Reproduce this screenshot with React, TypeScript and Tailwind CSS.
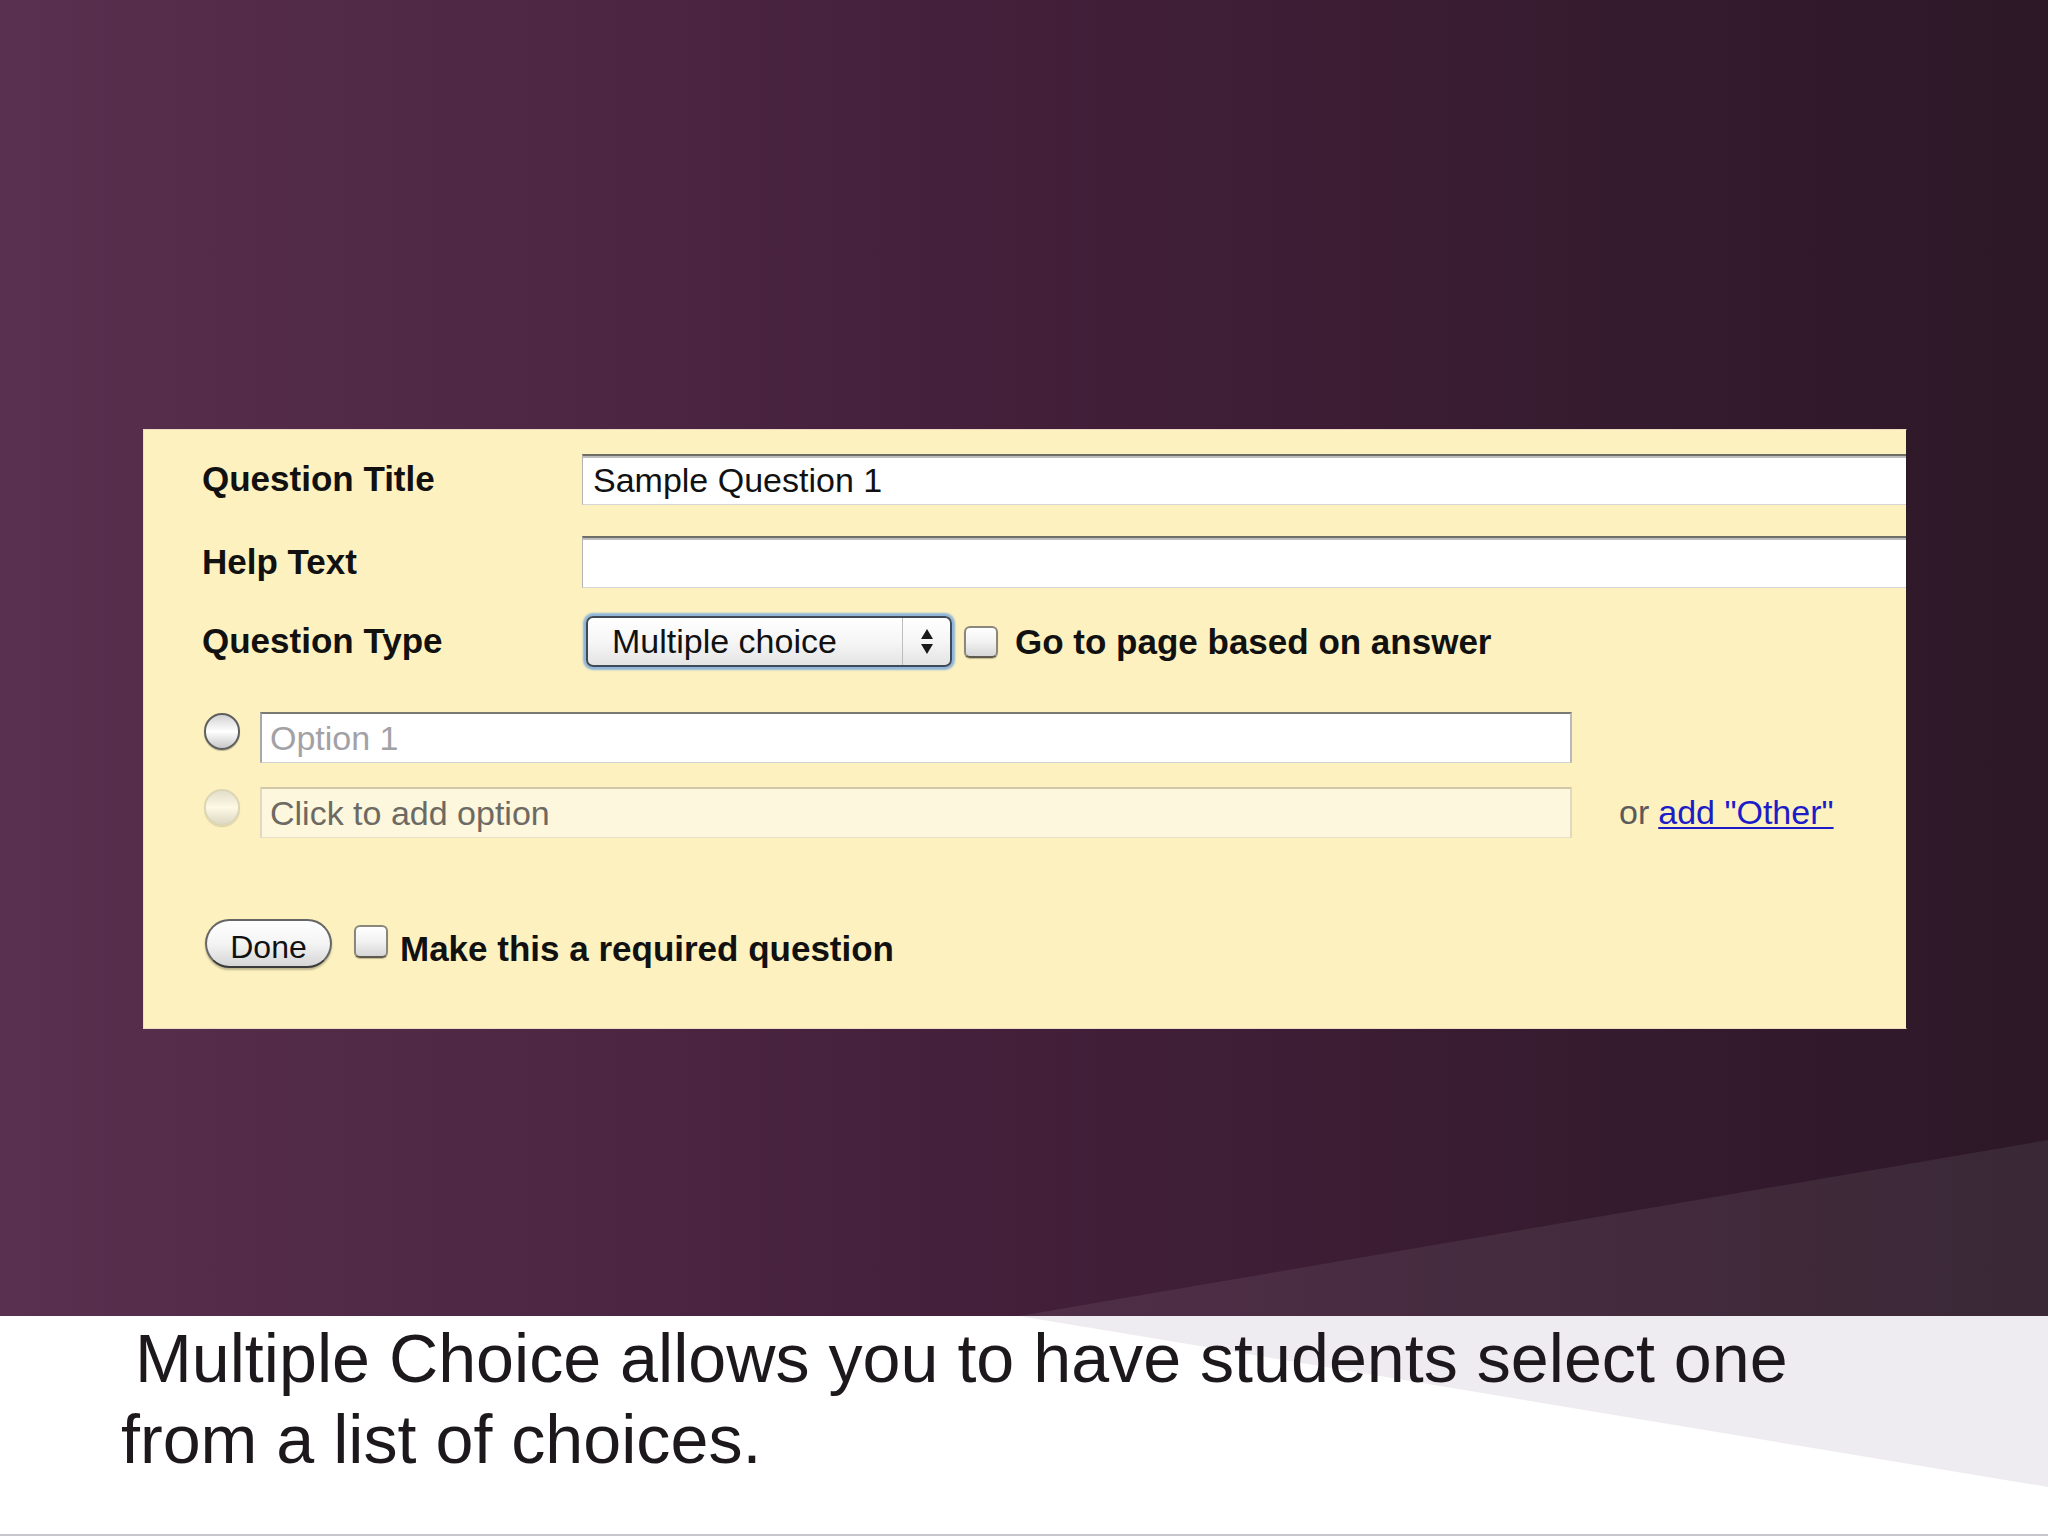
function Checkbox({ className = "" }: { className?: string }) {
  return (
    <div
      className={
        "shrink-0 w-[34px] h-[32px] rounded-[6px] border-2 border-[#8a877c] border-b-[#5e5a4e] bg-gradient-to-b from-white via-[#f2f2f2] to-[#d6d6d6] shadow-[0_1px_1px_rgba(0,0,0,0.25)] " +
        className
      }
    />
  );
}

function Radio({ faded = false }: { faded?: boolean }) {
  return (
    <div
      className={
        "shrink-0 w-[36px] h-[37px] rounded-full border-2 bg-gradient-to-b from-[#d2d2d2] via-white to-[#c8c8c8] shadow-[0_1px_1px_rgba(0,0,0,0.25)] " +
        (faded ? "border-[#c9c4b0] opacity-60" : "border-[#5f5f5f]")
      }
    />
  );
}

function FormPanel() {
  return (
    <div className="w-[1764px] h-[600px] bg-[#fdf2bf] border border-[#eedbc4] border-r-[#2a1a26] pl-[58px] pt-[24px] text-[#111]">
      {/* Question title */}
      <div className="flex items-center h-[51px]">
        <div className="w-[380px] text-[35px] font-bold">Question Title</div>
        <div className="flex-1 h-[51px] flex items-center pl-[10px] bg-white border-t-2 border-t-[#6f6e66] border-l border-l-[#b4b4b4] border-b border-b-[#d6d6d6] shadow-[inset_0_2px_0_#bdbdbd] text-[34px]">
          Sample Question 1
        </div>
      </div>

      {/* Help text */}
      <div className="flex items-center h-[52px] mt-[31px]">
        <div className="w-[380px] text-[35px] font-bold">Help Text</div>
        <div className="flex-1 h-[52px] bg-white border-t-2 border-t-[#6f6e66] border-l border-l-[#b4b4b4] border-b border-b-[#d6d6d6] shadow-[inset_0_2px_0_#bdbdbd]" />
      </div>

      {/* Question type */}
      <div className="flex items-center h-[53px] mt-[27px]">
        <div className="w-[384px] text-[35px] font-bold">Question Type</div>
        <div className="w-[366px] h-[51px] flex rounded-[7px] border-2 border-[#3e4a58] bg-gradient-to-b from-white via-[#f6f6f6] to-[#e4e4e4] shadow-[0_0_2px_3px_#8fb5da]">
          <div className="w-[314px] flex items-center pl-[24px] text-[34px]">Multiple choice</div>
          <div className="flex-1 flex items-center justify-center border-l border-[#bdbdbd]">
            <svg width="14" height="28" viewBox="0 0 14 28">
              <polygon points="7,1 13,11 1,11" fill="#1a1a1a" />
              <polygon points="1,16 13,16 7,26" fill="#1a1a1a" />
            </svg>
          </div>
        </div>
        <Checkbox className="ml-[12px]" />
        <div className="ml-[17px] mt-[2px] text-[35px] font-bold">Go to page based on answer</div>
      </div>

      {/* Options */}
      <div className="flex items-start mt-[44px]">
        <div className="ml-[2px] mt-px">
          <Radio />
        </div>
        <div className="ml-[20px] w-[1312px] h-[51px] flex items-center pl-[8px] bg-white border-t-2 border-t-[#7a7972] border-l-2 border-l-[#a9a9a9] border-r-2 border-r-[#b9b9b9] border-b border-b-[#d2d2d2] text-[34px] text-[#a2a2a6]">
          Option 1
        </div>
      </div>
      <div className="flex items-start mt-[24px]">
        <div className="ml-[2px] mt-[2px]">
          <Radio faded />
        </div>
        <div className="ml-[20px] w-[1312px] h-[51px] flex items-center pl-[8px] bg-[#fdf7de] border-t-2 border-t-[#cfc7a8] border-l-2 border-l-[#e0d9c0] border-r-2 border-r-[#e0d9c0] border-b border-b-[#e6dfc6] text-[34px] text-[#6c6a63]">
          Click to add option
        </div>
        <div className="ml-[47px] h-[51px] flex items-center text-[34px]">
          <span className="text-[#5a5a5a]">or</span>
          <span className="ml-[9px] text-[#1c1cc8] underline decoration-2 underline-offset-[3px]">add "Other"</span>
        </div>
      </div>

      {/* Footer actions */}
      <div className="flex items-start mt-[81px]">
        <div className="ml-[3px] w-[127px] h-[49px] flex items-center justify-center pt-[7px] rounded-full border-2 border-[#666] border-b-[#3a3a3a] bg-gradient-to-b from-white via-[#f4f4f4] to-[#d6d6d6] shadow-[0_2px_2px_rgba(0,0,0,0.25)] text-[32px]">
          Done
        </div>
        <Checkbox className="ml-[22px] mt-[6px] h-[33px]" />
        <div className="ml-[12px] mt-[10px] text-[35px] font-bold leading-[39px]">Make this a required question</div>
      </div>
    </div>
  );
}

export default function App() {
  return (
    <div className="w-[2048px] h-[1536px] overflow-hidden font-['Liberation_Sans',Arial,sans-serif]">
      {/* Slide background */}
      <section className="relative h-[1316px] bg-gradient-to-r from-[#59304f] via-[#431f3a] to-[#2c1827] pt-[429px] pl-[143px]">
        <svg className="absolute inset-0" width="2048" height="1316" viewBox="0 0 2048 1316">
          <polygon points="1019,1316 2048,1140 2048,1316" fill="#ffffff" fillOpacity="0.07" />
        </svg>
        <div className="relative">
          <FormPanel />
        </div>
      </section>

      {/* Caption */}
      <section className="relative h-[220px] bg-white border-b-2 border-[#c9c5cc]">
        <svg className="absolute inset-0" width="2048" height="220" viewBox="0 0 2048 220">
          <polygon points="1019,0 2048,0 2048,171" fill="#eeecf0" />
        </svg>
        <p className="relative w-[1860px] pl-[121px] pt-[2px] indent-[14px] text-[68.2px] leading-[81px] text-[#1c181c]">
          Multiple Choice allows you to have students select one from a list of choices.
        </p>
      </section>
    </div>
  );
}
